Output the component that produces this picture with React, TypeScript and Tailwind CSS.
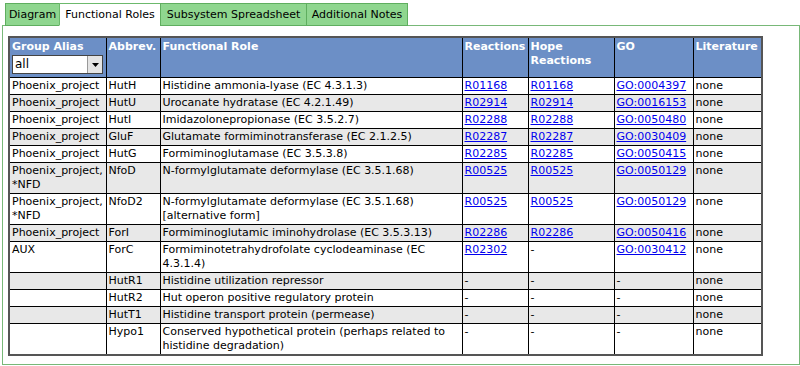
import React from "react";

type Row = {
  group: string[];
  abbr: string;
  role: string[];
  r: string;
  h: string;
  go: string;
  lit: string;
};

const rows: Row[] = [
  { group: ["Phoenix_project"], abbr: "HutH", role: ["Histidine ammonia-lyase (EC 4.3.1.3)"], r: "R01168", h: "R01168", go: "GO:0004397", lit: "none" },
  { group: ["Phoenix_project"], abbr: "HutU", role: ["Urocanate hydratase (EC 4.2.1.49)"], r: "R02914", h: "R02914", go: "GO:0016153", lit: "none" },
  { group: ["Phoenix_project"], abbr: "HutI", role: ["Imidazolonepropionase (EC 3.5.2.7)"], r: "R02288", h: "R02288", go: "GO:0050480", lit: "none" },
  { group: ["Phoenix_project"], abbr: "GluF", role: ["Glutamate formiminotransferase (EC 2.1.2.5)"], r: "R02287", h: "R02287", go: "GO:0030409", lit: "none" },
  { group: ["Phoenix_project"], abbr: "HutG", role: ["Formiminoglutamase (EC 3.5.3.8)"], r: "R02285", h: "R02285", go: "GO:0050415", lit: "none" },
  { group: ["Phoenix_project,", "*NFD"], abbr: "NfoD", role: ["N-formylglutamate deformylase (EC 3.5.1.68)"], r: "R00525", h: "R00525", go: "GO:0050129", lit: "none" },
  { group: ["Phoenix_project,", "*NFD"], abbr: "NfoD2", role: ["N-formylglutamate deformylase (EC 3.5.1.68)", "[alternative form]"], r: "R00525", h: "R00525", go: "GO:0050129", lit: "none" },
  { group: ["Phoenix_project"], abbr: "ForI", role: ["Formiminoglutamic iminohydrolase (EC 3.5.3.13)"], r: "R02286", h: "R02286", go: "GO:0050416", lit: "none" },
  { group: ["AUX"], abbr: "ForC", role: ["Formiminotetrahydrofolate cyclodeaminase (EC", "4.3.1.4)"], r: "R02302", h: "-", go: "GO:0030412", lit: "none" },
  { group: [""], abbr: "HutR1", role: ["Histidine utilization repressor"], r: "-", h: "-", go: "-", lit: "none" },
  { group: [""], abbr: "HutR2", role: ["Hut operon positive regulatory protein"], r: "-", h: "-", go: "-", lit: "none" },
  { group: [""], abbr: "HutT1", role: ["Histidine transport protein (permease)"], r: "-", h: "-", go: "-", lit: "none" },
  { group: [""], abbr: "Hypo1", role: ["Conserved hypothetical protein (perhaps related to", "histidine degradation)"], r: "-", h: "-", go: "-", lit: "none" },
];

function Lines({ lines }: { lines: string[] }) {
  return (
    <>
      {lines.map((l, i) => (
        <div key={i} className="whitespace-nowrap">
          {l || "\u00a0"}
        </div>
      ))}
    </>
  );
}

function Val({ v }: { v: string }) {
  if (v === "-") return <span>-</span>;
  return (
    <a href="#" className="text-[#0000ee] underline whitespace-nowrap">
      {v}
    </a>
  );
}

const td = "border border-black px-[2px] py-[1px] align-top leading-[14px] overflow-hidden";
const th = "border border-black px-[2px] pt-[2px] pb-[2px] align-top text-left font-bold text-white leading-[14px] whitespace-nowrap";

export default function App() {
  const tabs = [
    { label: "Diagram", w: "w-[55px]", active: false },
    { label: "Functional Roles", w: "w-[102px]", active: true },
    { label: "Subsystem Spreadsheet", w: "w-[147px]", active: false },
    { label: "Additional Notes", w: "w-[102px]", active: false },
  ];
  return (
    <div
      className="w-[800px] h-[366px] bg-white text-black text-[11px] overflow-hidden"
      style={{ fontFamily: "'DejaVu Sans', Verdana, sans-serif" }}
    >
      <div className="flex pl-[5px] pt-[3px] relative z-10">
        {tabs.map((t, i) => (
          <div
            key={i}
            className={`${t.w} h-[23px] ${i > 0 ? "-ml-px" : ""} border flex items-center justify-center leading-[14px] whitespace-nowrap ${
              t.active
                ? "bg-white border-[#6cb96c] border-b-white"
                : "bg-[#8fd68f] border-[#5fae5f]"
            }`}
          >
            {t.label}
          </div>
        ))}
      </div>
      <div className="ml-[2px] w-[798px] h-[340px] -mt-px border border-[#78b878] pl-[5px] pt-[10px]">
        <table className="table-fixed border-collapse border-2 border-[#555] w-[753px]">
          <colgroup>
            <col className="w-[97px]" />
            <col className="w-[54px]" />
            <col className="w-[302px]" />
            <col className="w-[66px]" />
            <col className="w-[86px]" />
            <col className="w-[79px]" />
            <col className="w-[69px]" />
          </colgroup>
          <thead>
            <tr className="bg-[#6c8fc6]">
              <th className={th}>
                <div>Group Alias</div>
                <div className="mt-[1px] mb-[1px] w-[91px] h-[19px] bg-white border border-[#444] flex items-stretch">
                  <div className="flex-1 pl-[2px] text-[12px] font-normal text-black leading-[17px]">all</div>
                  <div className="w-[15px] bg-[#e4e4e4] border-l border-[#999] flex items-center justify-center">
                    <svg width="9" height="6" viewBox="0 0 9 6">
                      <path d="M1 1 L8 1 L4.5 5 Z" fill="#000" />
                    </svg>
                  </div>
                </div>
              </th>
              <th className={th}>Abbrev.</th>
              <th className={th}>Functional Role</th>
              <th className={th}>Reactions</th>
              <th className={th}>
                <div>Hope</div>
                <div>Reactions</div>
              </th>
              <th className={th}>GO</th>
              <th className={th}>Literature</th>
            </tr>
          </thead>
          <tbody>
            {rows.map((row, i) => (
              <tr key={i} className={i % 2 === 1 ? "bg-[#e8e8e8]" : "bg-white"}>
                <td className={td}>
                  <Lines lines={row.group} />
                </td>
                <td className={td}>{row.abbr}</td>
                <td className={td}>
                  <Lines lines={row.role} />
                </td>
                <td className={td}>
                  <Val v={row.r} />
                </td>
                <td className={td}>
                  <Val v={row.h} />
                </td>
                <td className={td}>
                  <Val v={row.go} />
                </td>
                <td className={td}>{row.lit}</td>
              </tr>
            ))}
          </tbody>
        </table>
      </div>
    </div>
  );
}
